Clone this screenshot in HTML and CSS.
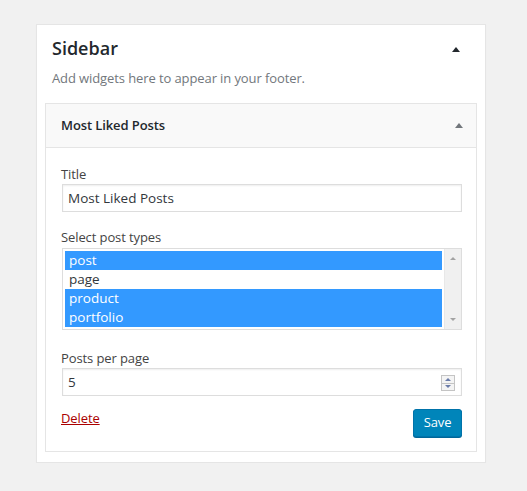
FILE: index.html
```html
<!DOCTYPE html>
<html lang="en">
<head>
<meta charset="utf-8">
<title>Widgets - Sidebar</title>
<link rel="stylesheet" href="styles.css">
</head>
<body>
<div class="sidebar-box">
  <div class="sidebar-head">
    <h2 class="sidebar-title">Sidebar</h2>
    <span class="arrow-up dark"></span>
  </div>
  <p class="sidebar-desc">Add widgets here to appear in your footer.</p>

  <div class="widget">
    <div class="widget-top">
      <h3 class="widget-title">Most Liked Posts</h3>
      <span class="arrow-up gray"></span>
    </div>
    <div class="widget-inside">
      <div class="field field-title">
        <label class="field-label" for="title">Title</label>
        <input class="text-input" id="title" type="text" value="Most Liked Posts">
      </div>

      <div class="field field-types">
        <label class="field-label">Select post types</label>
        <div class="listbox">
          <div class="options">
            <div class="option selected">post</div>
            <div class="option">page</div>
            <div class="option selected">product</div>
            <div class="option selected">portfolio</div>
          </div>
          <div class="scrollbar">
            <span class="sb-arrow sb-up"></span>
            <span class="sb-arrow sb-down"></span>
          </div>
        </div>
      </div>

      <div class="field field-count">
        <label class="field-label" for="count">Posts per page</label>
        <div class="number-wrap">
          <input class="text-input" id="count" type="text" value="5">
          <div class="spinner">
            <span class="spin-btn"><span class="spin-up"></span></span>
            <span class="spin-btn"><span class="spin-down"></span></span>
          </div>
        </div>
      </div>

      <div class="actions">
        <a class="delete-link" href="#">Delete</a>
        <button class="save-btn" type="button">Save</button>
      </div>
    </div>
  </div>
</div>
</body>
</html>
```

FILE: styles.css
```css
* { box-sizing: border-box; }

html, body {
  margin: 0;
  padding: 0;
  background: #f1f1f1;
}

body {
  padding: 24px 0 0 36px;
  font-family: "Open Sans", "Noto Sans", sans-serif;
  font-size: 13px;
  letter-spacing: -0.1px;
  color: #444;
}

.sidebar-box {
  width: 450px;
  background: #fff;
  border: 1px solid #e5e5e5;
  box-shadow: 0 1px 1px rgba(0, 0, 0, 0.04);
  padding: 0 8px 10px;
}

.sidebar-head {
  display: flex;
  align-items: center;
  justify-content: space-between;
  padding: 9px 7px 0;
  height: 37px;
}

.sidebar-title {
  margin: 0;
  font-size: 18px;
  line-height: 28px;
  font-weight: 600;
  letter-spacing: 0;
  color: #23282d;
}

.arrow-up {
  width: 0;
  height: 0;
  border-left: 4px solid transparent;
  border-right: 4px solid transparent;
}
.arrow-up.dark {
  border-bottom: 5px solid #23282d;
  margin-right: 10px;
  margin-top: 3px;
}
.arrow-up.gray {
  border-bottom: 5px solid #72777c;
  margin-right: 13px;
}

.sidebar-desc {
  margin: 7px 0 0;
  padding: 0 7px;
  font-size: 13px;
  line-height: 18px;
  color: #72777c;
}

.widget {
  margin-top: 16px;
  border: 1px solid #e5e5e5;
  background: #fff;
}

.widget-top {
  display: flex;
  align-items: center;
  justify-content: space-between;
  height: 44px;
  padding: 0 0 0 15px;
  background: #f9f9f9;
  border-bottom: 1px solid #e5e5e5;
}

.widget-title {
  margin: 0;
  font-size: 13px;
  line-height: 43px;
  font-weight: 600;
  color: #23282d;
}

.widget-inside {
  padding: 17px 15px 14px;
}

.field-label {
  display: block;
  font-size: 13px;
  line-height: 18px;
  color: #444;
}

.field-types { margin-top: 16px; }
.field-count { margin-top: 19px; }

.text-input {
  display: block;
  width: 100%;
  height: 28px;
  margin: 1px 0 0 1px;
  padding: 0 5px;
  border: 1px solid #ddd;
  box-shadow: inset 0 1px 2px rgba(0, 0, 0, 0.07);
  background: #fff;
  font-family: inherit;
  font-size: 13.5px;
  letter-spacing: 0;
  color: #32373c;
  outline: none;
}

.listbox {
  display: flex;
  gap: 2px;
  margin: 2px 0 0 1px;
  width: 100%;
  height: 82px;
  padding: 2px 0 2px 2px;
  border: 1px solid #ddd;
  background: #fff;
}

.options {
  flex: 1;
}

.option {
  height: 19px;
  line-height: 19px;
  padding-left: 4px;
  font-size: 13.5px;
  letter-spacing: 0;
  color: #32373c;
}
.option.selected {
  background: #3399ff;
  color: #fff;
}

.scrollbar {
  position: relative;
  width: 17px;
  margin: -2px 0;
  background: #f0f0f0;
  border-left: 1px solid #e8e8e8;
}

.sb-arrow {
  position: absolute;
  left: 5px;
  width: 0;
  height: 0;
  border-left: 3.5px solid transparent;
  border-right: 3.5px solid transparent;
}
.sb-up {
  top: 8px;
  border-bottom: 3.5px solid #a3a3a3;
}
.sb-down {
  bottom: 8px;
  border-top: 3.5px solid #a3a3a3;
}

.number-wrap {
  position: relative;
}

.spinner {
  position: absolute;
  top: 7px;
  right: 6px;
  width: 14px;
  height: 16px;
  display: flex;
  flex-direction: column;
  border: 1px solid #c4c4c4;
  background: #f4f4f4;
}

.spin-btn {
  flex: 1;
  display: flex;
  align-items: center;
  justify-content: center;
}
.spin-btn + .spin-btn {
  border-top: 1px solid #c4c4c4;
}

.spin-up, .spin-down {
  width: 0;
  height: 0;
  border-left: 3.5px solid transparent;
  border-right: 3.5px solid transparent;
}
.spin-up { border-bottom: 3.5px solid #6a7ba8; }
.spin-down { border-top: 3.5px solid #6a7ba8; }

.actions {
  display: flex;
  justify-content: space-between;
  align-items: flex-start;
  margin-top: 13px;
}

.delete-link {
  font-size: 13px;
  line-height: 18px;
  color: #a00;
  text-decoration: underline;
}

.save-btn {
  height: 28px;
  width: 49px;
  padding: 0 0 2px;
  border: 1px solid #0073aa;
  border-radius: 3px;
  background: #0085ba;
  box-shadow: 0 1px 0 #006799;
  color: #fff;
  font-family: inherit;
  font-size: 13px;
  letter-spacing: -0.1px;
  line-height: 24px;
  cursor: pointer;
  margin-right: -1px;
}
```
